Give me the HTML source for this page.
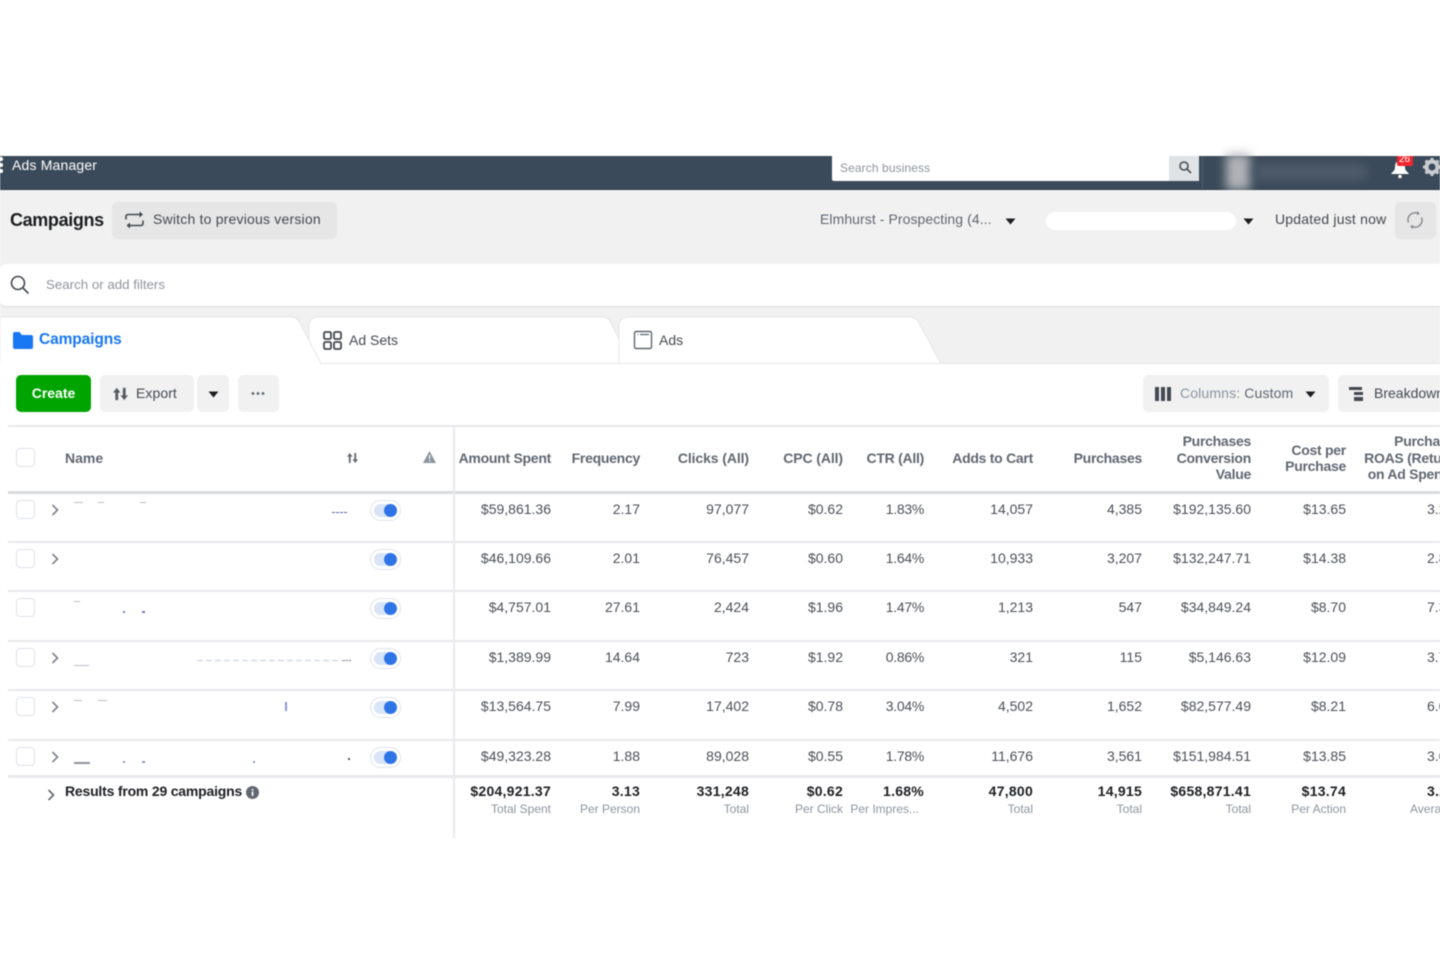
<!DOCTYPE html>
<html lang="en">
<head>
<meta charset="utf-8">
<title>Ads Manager</title>
<style>
html,body{margin:0;padding:0;background:#fff;}
body{width:1440px;height:960px;position:relative;overflow:hidden;font-family:"Liberation Sans",sans-serif;font-size:14px;color:#4b4f56;}
#p{position:absolute;left:0;top:0;width:1440px;height:960px;overflow:hidden;filter:blur(.45px);}
.a{position:absolute;white-space:nowrap;}
.b{position:absolute;}
.btn{position:absolute;background:#f1f1f1;border-radius:5px;}
.row{position:absolute;left:0;width:1440px;height:20px;line-height:20px;color:#4b4f56;}
.row span{position:absolute;top:0;white-space:nowrap;}
.row .c5{letter-spacing:-.3px;}
.c1{right:889px}.c2{right:800px}.c3{right:691px}.c4{right:597px}.c5{right:516px}.c6{right:407px}.c7{right:298px}.c8{right:189px}.c9{right:94px}.c10{left:1427px}
.h{position:absolute;text-align:right;font-weight:bold;color:#606770;line-height:16.5px;white-space:nowrap;letter-spacing:-.27px;}
.cb{position:absolute;left:16px;width:17px;height:17px;border:1.5px solid #dfe2e8;border-radius:4px;background:#fff;}
.line{position:absolute;left:8px;width:1432px;height:2px;background:#e9eaec;}
.tg{position:absolute;left:370px;width:29px;height:19px;border:1px solid #dfe3ec;border-radius:11px;background:#fff;}
.tg i{position:absolute;left:3px;top:3px;width:23px;height:13px;border-radius:7px;background:#d8e4f8;}
.tg b{position:absolute;left:12.500px;top:2.500px;width:13px;height:13px;border-radius:50%;background:#2f74e6;}
.tot{position:absolute;left:0;width:1440px;height:40px;top:782px;}
.tot span{position:absolute;white-space:nowrap;font-weight:bold;color:#1c1e21;top:0;line-height:18px;letter-spacing:.25px;}
.tot em{position:absolute;white-space:nowrap;font-style:normal;font-size:12px;color:#8d949e;top:18.500px;line-height:17px;}
.arr{position:absolute;}
</style>
</head>
<body>
<div id="p">
<!-- top bar -->
<div class="b" style="left:0;top:156px;width:1440px;height:33px;background:#3b4a5a;"></div>
<div class="b" style="left:0;top:189px;width:1440px;height:1px;background:#2f3c4a;"></div>
<div class="b" style="left:0;top:157px;width:4px;height:16px;background:radial-gradient(circle at 1px 2px,#fff 2px,transparent 2.2px),radial-gradient(circle at 1px 8px,#fff 2px,transparent 2.2px),radial-gradient(circle at 1px 14px,#fff 2px,transparent 2.2px);"></div>
<div class="a" style="left:12px;top:156px;line-height:18px;color:#fff;font-size:14px;letter-spacing:.17px;">Ads Manager</div>
<div class="b" style="left:832px;top:156px;width:337px;height:25px;background:#fff;border-radius:0 0 0 2px;"></div>
<div class="a" style="left:840px;top:160px;line-height:16px;font-size:12px;color:#90949c;letter-spacing:.1px;">Search business</div>
<div class="b" style="left:1169px;top:156px;width:30px;height:25px;background:#dfe3e6;"></div>
<svg class="b" style="left:1177px;top:159px" width="16" height="16" viewBox="0 0 16 16" fill="none" stroke="#4b4f56" stroke-width="1.600"><circle cx="7" cy="7" r="4"/><path d="M10 10l4 4"/></svg>
<div class="b" style="left:1202px;top:156px;width:1px;height:33px;background:#4e5d6c;"></div>
<div class="b" style="left:1226px;top:154px;width:24px;height:36px;background:#b0b3b7;filter:blur(5px);"></div>
<div class="b" style="left:1256px;top:164px;width:110px;height:16px;background:#4f5d6b;filter:blur(5px);"></div>
<svg class="b" style="left:1389px;top:160px" width="22" height="19" viewBox="0 0 22 19"><path d="M11 1c-4 0-5 3-5 6 0 3-1 4-3.500 6v1h17v-1c-2.500-2-3.500-3-3.500-6 0-3-1-6-5-6z" fill="#fff"/><circle cx="11" cy="16.500" r="1.800" fill="#fff"/></svg>
<div class="b" style="left:1397px;top:156px;width:16px;height:10px;background:#f0252d;border-radius:0 0 2px 2px;"></div>
<div class="a" style="left:1399px;top:154px;font-size:10px;line-height:11px;color:#fff;">26</div>
<svg class="b" style="left:1422px;top:157px" width="20" height="20" viewBox="0 0 20 20"><circle cx="10" cy="10" r="5.500" fill="none" stroke="#c8ccd0" stroke-width="4"/><path d="M10 1v4M10 15v4M1 10h4M15 10h4M3.600 3.600l3 3M13.400 13.400l3 3M16.400 3.600l-3 3M6.600 13.400l-3 3" stroke="#c8ccd0" stroke-width="3"/></svg>

<!-- header band -->
<div class="b" style="left:0;top:190px;width:1440px;height:173px;background:#f1f1f1;"></div>
<div class="a" style="left:10px;top:209px;font-size:18px;line-height:22px;font-weight:bold;color:#1c1e21;letter-spacing:-.36px;">Campaigns</div>
<div class="btn" style="left:112px;top:202px;width:225px;height:37px;background:#e6e6e6;"></div>
<svg class="b" style="left:124px;top:210px" width="22" height="22" viewBox="0 0 22 22" fill="none" stroke="#444950" stroke-width="1.600"><path d="M2 9.500V6.500a2 2 0 0 1 2-2h12"/><path d="M15.500 1.500L19 4.500l-3.500 3z" fill="#444950" stroke="none"/><path d="M19 10.500v3a2 2 0 0 1-2 2H6"/><path d="M6 12.500L2.500 15.500 6 18.500z" fill="#444950" stroke="none"/></svg>
<div class="a" style="left:153px;top:210px;line-height:18px;color:#444950;letter-spacing:.2px;">Switch to previous version</div>
<div class="a" style="left:820px;top:210px;line-height:18px;color:#606770;letter-spacing:.07px;">Elmhurst - Prospecting (4...</div>
<svg class="arr" style="left:1005px;top:218px" width="11" height="7"><path d="M.5 .5h10L5.500 6.500z" fill="#1c1e21"/></svg>
<div class="b" style="left:1046px;top:212px;width:190px;height:18px;background:#fff;border-radius:9px;"></div>
<svg class="arr" style="left:1243px;top:218px" width="11" height="7"><path d="M.5 .5h10L5.500 6.500z" fill="#1c1e21"/></svg>
<div class="a" style="left:1275px;top:210px;line-height:18px;color:#444950;letter-spacing:.2px;">Updated just now</div>
<div class="btn" style="left:1395px;top:202px;width:41px;height:37px;background:#e6e6e6;"></div>
<svg class="b" style="left:1405px;top:210px" width="20" height="20" viewBox="0 0 20 20" fill="none" stroke="#8a8d91" stroke-width="1.600"><path d="M3.500 12.500A7 7 0 0 1 13 3.500"/><path d="M16.500 7.500A7 7 0 0 1 7 16.500"/><path d="M12 1l3 2.500-3 2z" fill="#8a8d91" stroke="none"/><path d="M8 19l-3-2.500 3-2z" fill="#8a8d91" stroke="none"/></svg>

<!-- filter bar -->
<div class="b" style="left:0;top:264px;width:1440px;height:42px;background:#fff;border-radius:6px 0 0 6px;border-bottom:1px solid #dcdcdc;"></div>
<svg class="b" style="left:9px;top:274px" width="22" height="22" viewBox="0 0 22 22" fill="none" stroke="#444950" stroke-width="1.600"><circle cx="9" cy="9" r="6.500"/><path d="M14 14l5.500 5.500"/></svg>
<div class="a" style="left:46px;top:276px;line-height:18px;font-size:13.300px;color:#90949c;">Search or add filters</div>

<!-- tabs -->
<svg class="b" style="left:0;top:316px" width="960" height="48" viewBox="0 0 960 48">
<path d="M309 47.500 V10 a9 9 0 0 1 9-9 H602 a10 10 0 0 1 9 6 L631 47.500z" fill="#fff" stroke="#e6e6e6" />
<path d="M619 47.500 V10 a9 9 0 0 1 9-9 H910 a10 10 0 0 1 9 6 L941 47.500z" fill="#fff" stroke="#e6e6e6"/>
<path d="M0 47.500 V1 H291 a10 10 0 0 1 9 6 L321 47.500z" fill="#fff" stroke="#e6e6e6"/>
</svg>
<div class="b" style="left:0;top:363px;width:1440px;height:62px;background:#fff;"></div>
<div class="b" style="left:0;top:362px;width:320px;height:2px;background:#fff;"></div>
<div class="b" style="left:320px;top:363px;width:1120px;height:1px;background:#e6e6e6;"></div>
<svg class="b" style="left:13px;top:331px" width="20" height="18" viewBox="0 0 20 18"><path d="M0 3a2 2 0 0 1 2-2h4.500l2.500 3h9a2 2 0 0 1 2 2v10a2 2 0 0 1-2 2H2a2 2 0 0 1-2-2z" fill="#1877f2"/></svg>
<div class="a" style="left:39px;top:330px;line-height:19px;font-size:15.500px;font-weight:bold;color:#1877f2;letter-spacing:-.1px;">Campaigns</div>
<svg class="b" style="left:323px;top:331px" width="19" height="19" viewBox="0 0 19 19" fill="none" stroke="#444950" stroke-width="1.800"><rect x="1" y="1" width="7" height="7" rx="1.500"/><rect x="11" y="1" width="7" height="7" rx="1.500"/><rect x="1" y="11" width="7" height="7" rx="1.500"/><rect x="11" y="11" width="7" height="7" rx="1.500"/></svg>
<div class="a" style="left:349px;top:331px;line-height:18px;color:#444950;">Ad Sets</div>
<svg class="b" style="left:633px;top:330px" width="20" height="20" viewBox="0 0 20 20" fill="none" stroke="#606770" stroke-width="1.400"><rect x="1.500" y="1.500" width="17" height="17" rx="1.500"/><path d="M4.500 4.500h.8M7 4.500h9" stroke-width="1.300"/></svg>
<div class="a" style="left:659px;top:331px;line-height:18px;color:#444950;">Ads</div>

<!-- toolbar -->
<div class="b" style="left:16px;top:375px;width:75px;height:37px;background:#00a400;border-radius:5px;"></div>
<div class="a" style="left:16px;top:383.500px;width:75px;text-align:center;line-height:18px;font-weight:bold;color:#fff;">Create</div>
<div class="btn" style="left:100px;top:375px;width:94px;height:37px;"></div>
<svg class="b" style="left:112px;top:387px" width="17" height="14" viewBox="0 0 18 15" fill="#555a61"><path d="M5 1l4 5H6.500v8h-3V6H1z"/><path d="M13 14l4-5h-2.500V1h-3v8H9z"/></svg>
<div class="a" style="left:136px;top:383.500px;line-height:18px;color:#444950;letter-spacing:.07px;">Export</div>
<div class="btn" style="left:197px;top:375px;width:32px;height:37px;"></div>
<svg class="arr" style="left:208px;top:391px" width="11" height="7"><path d="M.5 .5h10L5.500 6.500z" fill="#1c1e21"/></svg>
<div class="btn" style="left:238px;top:375px;width:41px;height:37px;"></div>
<svg class="b" style="left:251px;top:391px" width="14" height="5" fill="#606770"><circle cx="2" cy="2.500" r="1.400"/><circle cx="7" cy="2.500" r="1.400"/><circle cx="12" cy="2.500" r="1.400"/></svg>

<div class="btn" style="left:1143px;top:375px;width:186px;height:37px;"></div>
<svg class="b" style="left:1155px;top:387px" width="16" height="14" fill="#444950"><rect width="4" height="14"/><rect x="6" width="4" height="14"/><rect x="12" width="4" height="14"/></svg>
<div class="a" style="left:1180px;top:383.500px;line-height:18px;color:#8d949e;letter-spacing:.14px;">Columns: <span style="color:#606770">Custom</span></div>
<svg class="arr" style="left:1305px;top:391px" width="11" height="7"><path d="M.5 .5h10L5.500 6.500z" fill="#1c1e21"/></svg>
<div class="btn" style="left:1338px;top:375px;width:110px;height:37px;"></div>
<svg class="b" style="left:1349px;top:387px" width="16" height="15" fill="#444950"><rect x="0" y="0" width="13" height="3"/><rect x="5" y="5" width="9" height="3"/><rect x="5" y="10" width="9" height="4"/></svg>
<div class="a" style="left:1374px;top:383.500px;line-height:18px;color:#444950;">Breakdown</div>

<!-- table lines -->
<div class="line" style="top:425px;height:2px;"></div>
<div class="line" style="top:491px;height:3px;background:#d9dadc;"></div>
<div class="line" style="top:541px;"></div>
<div class="line" style="top:590px;"></div>
<div class="line" style="top:640px;"></div>
<div class="line" style="top:689px;"></div>
<div class="line" style="top:738.500px;"></div>
<div class="line" style="top:775px;height:3px;"></div>
<div class="b" style="left:453px;top:426px;width:2px;height:412px;background:#e9eaec;"></div>

<!-- header -->
<div class="cb" style="top:448px;"></div>
<div class="h" style="left:65px;top:450px;letter-spacing:0;">Name</div>
<svg class="b" style="left:347px;top:453px" width="11" height="10" viewBox="0 0 12 11" fill="#606770"><path d="M3 0l3 4H4v7H2V4H0z"/><path d="M9 11l3-4h-2V0H8v7H6z"/></svg>
<svg class="b" style="left:423px;top:451px" width="13" height="12" viewBox="0 0 13 12"><path d="M6.500 0L13 12H0z" fill="#8d949e"/><rect x="6" y="4" width="1.200" height="4" fill="#fff"/><rect x="6" y="9" width="1.200" height="1.300" fill="#fff"/></svg>
<div class="h" style="right:889px;top:450px;">Amount Spent</div>
<div class="h" style="right:800px;top:450px;">Frequency</div>
<div class="h" style="right:691px;top:450px;letter-spacing:-.1px;">Clicks (All)</div>
<div class="h" style="right:597px;top:450px;letter-spacing:-.1px;">CPC (All)</div>
<div class="h" style="right:516px;top:450px;">CTR (All)</div>
<div class="h" style="right:407px;top:450px;">Adds to Cart</div>
<div class="h" style="right:298px;top:450px;">Purchases</div>
<div class="h" style="right:189px;top:433px;">Purchases<br>Conversion<br>Value</div>
<div class="h" style="right:94px;top:441.500px;">Cost per<br>Purchase</div>
<div class="h" style="left:1345px;top:433px;text-align:right;width:110px;">Purchase<br>ROAS (Return<br>on Ad Spend)</div>

<!-- rows -->
<div class="cb" style="top:500px;"></div>
<div class="cb" style="top:549px;"></div>
<div class="cb" style="top:598px;"></div>
<div class="cb" style="top:648px;"></div>
<div class="cb" style="top:697px;"></div>
<div class="cb" style="top:747px;"></div>

<svg class="b" style="left:50px;top:503px" width="12" height="270" fill="none" stroke="#7c8087" stroke-width="1.600"><path d="M2.500 2l5 5-5 5"/><path d="M2.500 51l5 5-5 5"/><path d="M2.500 150l5 5-5 5"/><path d="M2.500 199l5 5-5 5"/><path d="M2.500 249l5 5-5 5"/></svg>

<div class="tg" style="top:500px;"><i></i><b></b></div>
<div class="tg" style="top:549px;"><i></i><b></b></div>
<div class="tg" style="top:598px;"><i></i><b></b></div>
<div class="tg" style="top:648px;"><i></i><b></b></div>
<div class="tg" style="top:697px;"><i></i><b></b></div>
<div class="tg" style="top:747px;"><i></i><b></b></div>

<!-- redacted name residue -->
<div class="b" style="left:332px;top:512px;width:16px;height:1px;background:repeating-linear-gradient(90deg,#5566a8 0 3px,transparent 3px 4px);"></div>
<div class="b" style="left:74px;top:502px;width:9px;height:1px;background:#b9bdc6;"></div>
<div class="b" style="left:98px;top:502px;width:6px;height:1px;background:#b9bdc6;"></div>
<div class="b" style="left:140px;top:502px;width:6px;height:1px;background:#b9bdc6;"></div>
<div class="b" style="left:74px;top:601px;width:6px;height:1px;background:#b9bdc6;"></div>
<div class="b" style="left:123px;top:611px;width:2px;height:2px;background:#6f7db8;"></div>
<div class="b" style="left:142px;top:611px;width:3px;height:2px;background:#6f7db8;"></div>
<div class="b" style="left:74px;top:665px;width:15px;height:1px;background:#b9bdc6;"></div>
<div class="b" style="left:197px;top:660px;width:146px;height:1px;background:repeating-linear-gradient(90deg,#c6cce4 0 6px,transparent 6px 9px);"></div>
<div class="b" style="left:343px;top:660px;width:9px;height:1px;background:repeating-linear-gradient(90deg,#70747c 0 2px,transparent 2px 3px);"></div>
<div class="b" style="left:285px;top:702px;width:2px;height:9px;background:#8797cf;"></div>
<div class="b" style="left:74px;top:700px;width:8px;height:1px;background:#b9bdc6;"></div>
<div class="b" style="left:98px;top:700px;width:9px;height:1px;background:#b9bdc6;"></div>
<div class="b" style="left:74px;top:762px;width:16px;height:2px;background:#8d919a;"></div>
<div class="b" style="left:348px;top:758px;width:2px;height:2px;background:#555;"></div>
<div class="b" style="left:123px;top:761px;width:2px;height:2px;background:#8a96c8;"></div>
<div class="b" style="left:142px;top:761px;width:3px;height:2px;background:#8a96c8;"></div>
<div class="b" style="left:253px;top:761px;width:2px;height:2px;background:#8a96c8;"></div>

<div class="row" style="top:499px;"><span class="c1">$59,861.36</span><span class="c2">2.17</span><span class="c3">97,077</span><span class="c4">$0.62</span><span class="c5">1.83%</span><span class="c6">14,057</span><span class="c7">4,385</span><span class="c8">$192,135.60</span><span class="c9">$13.65</span><span class="c10">3.25</span></div>
<div class="row" style="top:548px;"><span class="c1">$46,109.66</span><span class="c2">2.01</span><span class="c3">76,457</span><span class="c4">$0.60</span><span class="c5">1.64%</span><span class="c6">10,933</span><span class="c7">3,207</span><span class="c8">$132,247.71</span><span class="c9">$14.38</span><span class="c10">2.87</span></div>
<div class="row" style="top:597px;"><span class="c1">$4,757.01</span><span class="c2">27.61</span><span class="c3">2,424</span><span class="c4">$1.96</span><span class="c5">1.47%</span><span class="c6">1,213</span><span class="c7">547</span><span class="c8">$34,849.24</span><span class="c9">$8.70</span><span class="c10">7.33</span></div>
<div class="row" style="top:647px;"><span class="c1">$1,389.99</span><span class="c2">14.64</span><span class="c3">723</span><span class="c4">$1.92</span><span class="c5">0.86%</span><span class="c6">321</span><span class="c7">115</span><span class="c8">$5,146.63</span><span class="c9">$12.09</span><span class="c10">3.70</span></div>
<div class="row" style="top:696px;"><span class="c1">$13,564.75</span><span class="c2">7.99</span><span class="c3">17,402</span><span class="c4">$0.78</span><span class="c5">3.04%</span><span class="c6">4,502</span><span class="c7">1,652</span><span class="c8">$82,577.49</span><span class="c9">$8.21</span><span class="c10">6.09</span></div>
<div class="row" style="top:746px;"><span class="c1">$49,323.28</span><span class="c2">1.88</span><span class="c3">89,028</span><span class="c4">$0.55</span><span class="c5">1.78%</span><span class="c6">11,676</span><span class="c7">3,561</span><span class="c8">$151,984.51</span><span class="c9">$13.85</span><span class="c10">3.08</span></div>

<!-- totals -->
<svg class="b" style="left:46px;top:788px" width="12" height="14" fill="none" stroke="#606770" stroke-width="1.600"><path d="M2.500 2l5 5-5 5"/></svg>
<div class="a" style="left:65px;top:782px;line-height:18px;font-weight:bold;color:#1c1e21;letter-spacing:-.2px;">Results from 29 campaigns</div>
<svg class="b" style="left:246px;top:786px" width="13" height="13" viewBox="0 0 13 13"><circle cx="6.500" cy="6.500" r="6.500" fill="#606770"/><rect x="5.700" y="5.500" width="1.700" height="4.500" fill="#fff"/><rect x="5.700" y="3" width="1.700" height="1.600" fill="#fff"/></svg>
<div class="tot">
<span class="c1">$204,921.37</span><em class="c1">Total Spent</em>
<span class="c2">3.13</span><em class="c2">Per Person</em>
<span class="c3">331,248</span><em class="c3">Total</em>
<span class="c4">$0.62</span><em class="c4">Per Click</em>
<span class="c5">1.68%</span><em style="right:521px;">Per Impres...</em>
<span class="c6">47,800</span><em class="c6">Total</em>
<span class="c7">14,915</span><em class="c7">Total</em>
<span class="c8">$658,871.41</span><em class="c8">Total</em>
<span class="c9">$13.74</span><em class="c9">Per Action</em>
<span class="c10">3.21</span><em style="left:1410px;">Average</em>
</div>
</div>
</body>
</html>
